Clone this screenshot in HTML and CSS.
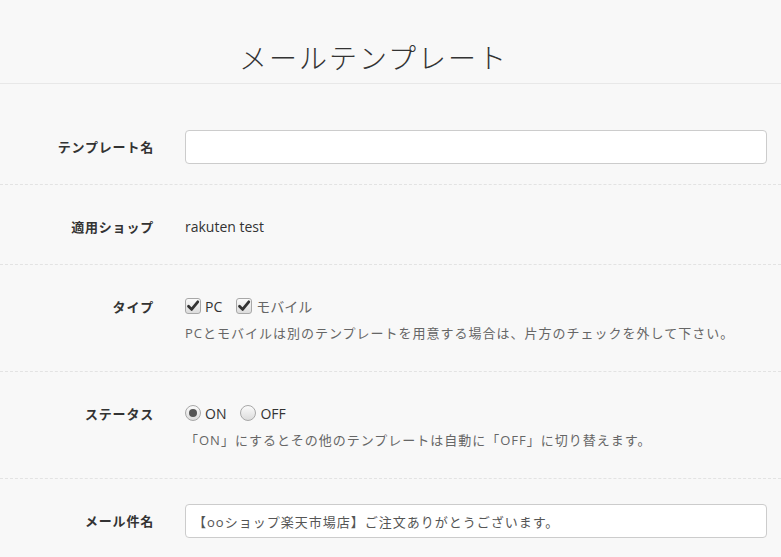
FILE: index.html
```html
<!DOCTYPE html>
<html lang="ja">
<head>
    <meta charset="UTF-8">
    <title>メールテンプレート</title>
    <link rel="stylesheet" href="styles.css">
</head>
<body>
    <div class="page-header">
        <h1>メールテンプレート</h1>
    </div>
    <form class="form">
        <div class="form-row">
            <label class="form-label" for="tpl-name">テンプレート名</label>
            <div class="form-field">
                <input type="text" class="text-input" id="tpl-name">
            </div>
        </div>
        <div class="form-row">
            <div class="form-label">適用ショップ</div>
            <div class="form-field">
                <div class="static-value">rakuten test</div>
            </div>
        </div>
        <div class="form-row">
            <div class="form-label">タイプ</div>
            <div class="form-field">
                <div class="options">
                    <label class="option">
                        <span class="check">
                            <svg width="14" height="14" viewBox="0 0 14 14"><path d="M2.5 7.2 L5.6 10.4 L11.8 2.8" fill="none" stroke="#333" stroke-width="2.8" stroke-linecap="round" stroke-linejoin="round"/></svg>
                        </span>
                        <span>PC</span>
                    </label>
                    <label class="option">
                        <span class="check">
                            <svg width="14" height="14" viewBox="0 0 14 14"><path d="M2.5 7.2 L5.6 10.4 L11.8 2.8" fill="none" stroke="#333" stroke-width="2.8" stroke-linecap="round" stroke-linejoin="round"/></svg>
                        </span>
                        <span class="muted">モバイル</span>
                    </label>
                </div>
                <p class="help">PCとモバイルは別のテンプレートを用意する場合は、片方のチェックを外して下さい。</p>
            </div>
        </div>
        <div class="form-row">
            <div class="form-label">ステータス</div>
            <div class="form-field">
                <div class="options">
                    <label class="option">
                        <span class="radio checked"></span>
                        <span>ON</span>
                    </label>
                    <label class="option">
                        <span class="radio"></span>
                        <span>OFF</span>
                    </label>
                </div>
                <p class="help">「ON」にするとその他のテンプレートは自動に「OFF」に切り替えます。</p>
            </div>
        </div>
        <div class="form-row">
            <label class="form-label" for="subject">メール件名</label>
            <div class="form-field">
                <input type="text" class="text-input" id="subject" value="【ooショップ楽天市場店】ご注文ありがとうございます。">
            </div>
        </div>
    </form>
</body>
</html>
```

FILE: styles.css
```css
body {
    margin: 0;
    background-color: #f8f8f8;
    font-family: "Open Sans", "Noto Sans CJK JP", sans-serif;
    font-size: 13px;
    color: #333;
    overflow: hidden;
}
.page-header {
    height: 84px;
    border-bottom: 1px solid #e8e8e8;
    box-sizing: border-box;
    padding: 38px 34px 0 0;
    text-align: center;
}
.page-header h1 {
    margin: 0;
    font-size: 28px;
    line-height: 40px;
    font-weight: 300;
    letter-spacing: 2px;
    color: #333;
}
.form {
    margin-top: 21px;
}
.form-row {
    display: grid;
    grid-template-columns: 154px 1fr;
    column-gap: 31px;
    padding: 25px 14px 20px 0;
    border-bottom: 1px dashed #e3e3e3;
}
.form-row:last-child {
    border-bottom: none;
}
.form-label {
    text-align: right;
    font-weight: bold;
    line-height: 34px;
    letter-spacing: 0.8px;
    color: #333;
}
.text-input {
    display: block;
    width: 100%;
    height: 34px;
    box-sizing: border-box;
    border: 1px solid #ccc;
    border-radius: 4px;
    background: #fff;
    padding: 0 7px;
    font-family: inherit;
    font-size: 13px;
    letter-spacing: 1px;
    color: #555;
}
.static-value {
    line-height: 34px;
    font-size: 14px;
}
.options {
    display: flex;
    gap: 14px;
    height: 32px;
    align-items: center;
}
.option {
    display: flex;
    align-items: center;
    gap: 4px;
    font-size: 14px;
}
.muted {
    color: #666;
}
.check {
    width: 16px;
    height: 16px;
    box-sizing: border-box;
    border: 1px solid #a8a8a8;
    border-radius: 3px;
    background: linear-gradient(#fbfbfb, #dcdcdc);
    display: flex;
    align-items: center;
    justify-content: center;
}
.radio {
    width: 16px;
    height: 16px;
    box-sizing: border-box;
    border: 1px solid #a8a8a8;
    border-radius: 50%;
    background: linear-gradient(#fbfbfb, #dcdcdc);
    display: flex;
    align-items: center;
    justify-content: center;
}
.radio.checked::after {
    content: "";
    width: 8px;
    height: 8px;
    border-radius: 50%;
    background: #555;
}
.help {
    margin: 0 0 7px;
    line-height: 22px;
    letter-spacing: 1px;
    color: #666;
}
```
